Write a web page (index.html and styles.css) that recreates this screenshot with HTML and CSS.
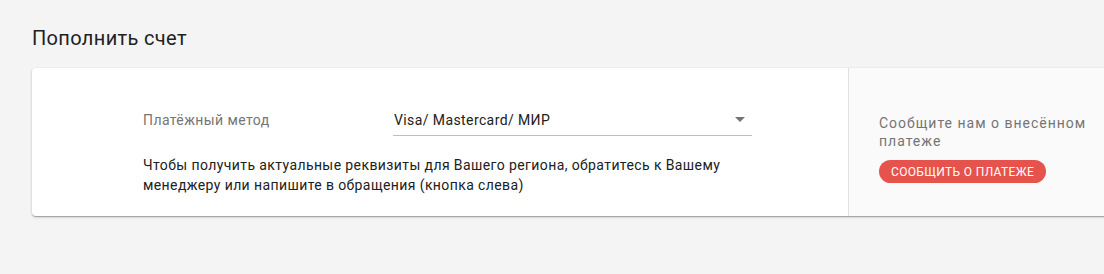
FILE: index.html
```html
<!DOCTYPE html>
<html lang="ru">

<head>
    <meta charset="UTF-8">
    <meta name="viewport" content="width=device-width, initial-scale=1.0">
    <title>Пополнить счет</title>
    <link rel="stylesheet" href="styles.css">
</head>

<body>
    <div class="page">
        <h1 class="page-title">Пополнить счет</h1>

        <div class="card">
            <div class="card-main">
                <div class="field-row">
                    <label class="field-label" for="method">Платёжный метод</label>
                    <div class="select" id="method">
                        <span class="select-value">Visa/ Mastercard/ МИР</span>
                        <svg class="select-arrow" width="10" height="5" viewBox="0 0 10 5">
                            <path d="M0 0 L10 0 L5 5 Z" fill="#757575"></path>
                        </svg>
                    </div>
                </div>
                <p class="hint">
                    Чтобы получить актуальные реквизиты для Вашего региона, обратитесь к Вашему
                    менеджеру или напишите в обращения (кнопка слева)
                </p>
            </div>

            <div class="card-side">
                <p class="side-text">Сообщите нам о внесённом платеже</p>
                <button class="report-btn">Сообщить о платеже</button>
            </div>
        </div>
    </div>
</body>

</html>
```

FILE: styles.css
```css
body {
    margin: 0;
    padding: 0;
    background: #f4f4f4;
    font-family: Roboto, "Noto Sans", Arial, sans-serif;
    color: #212121;
    overflow: hidden;
}

.page {
    padding: 24px 32px;
}

.page-title {
    margin: 0 0 16px;
    font-size: 20px;
    font-weight: 400;
    line-height: 28px;
    letter-spacing: 0.35px;
    color: #212121;
}

.card {
    display: flex;
    width: 1140px;
    background: #fff;
    border-radius: 4px;
    box-shadow: 0 1px 3px rgba(0, 0, 0, 0.2), 0 1px 1px rgba(0, 0, 0, 0.14), 0 2px 1px -1px rgba(0, 0, 0, 0.12);
}

.card-main {
    width: 816px;
    box-sizing: border-box;
    padding: 36px 0 21px 111px;
    letter-spacing: 0.4px;
}

.field-row {
    display: flex;
    align-items: center;
    width: 609px;
}

.field-label {
    width: 250px;
    flex-shrink: 0;
    font-size: 14px;
    color: #757575;
}

.select {
    flex: 1;
    display: flex;
    align-items: center;
    justify-content: space-between;
    height: 31px;
    padding: 0 7px 0 1px;
    border-bottom: 1px solid #bdbdbd;
}

.select-value {
    font-size: 14px;
    color: #212121;
}

.select-arrow {
    display: block;
    margin-top: -1px;
}

.hint {
    width: 609px;
    margin: 19px 0 0;
    font-size: 14px;
    line-height: 20px;
    color: #212121;
}

.card-side {
    flex: 1;
    padding: 46px 30px 0;
    background: #fafafa;
    border-left: 1px solid #e0e0e0;
}

.side-text {
    width: 240px;
    margin: 0;
    font-size: 14px;
    line-height: 18px;
    letter-spacing: 1px;
    color: #757575;
}

.report-btn {
    margin-top: 10px;
    height: 23px;
    padding: 0 12px;
    border: none;
    border-radius: 12px;
    background: #e6534c;
    color: #fff;
    font-family: inherit;
    font-size: 12px;
    letter-spacing: 0.35px;
    text-transform: uppercase;
    cursor: pointer;
}
```
